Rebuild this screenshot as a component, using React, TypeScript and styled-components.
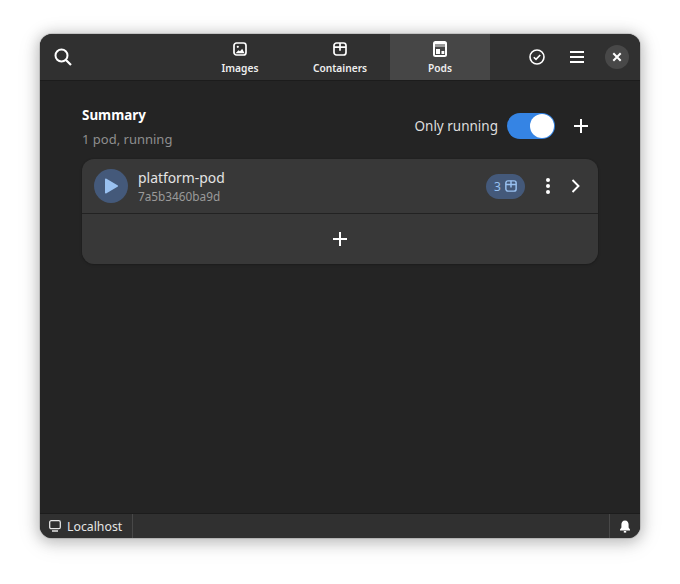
import React from "react";
import styled, { createGlobalStyle } from "styled-components";

const Global = createGlobalStyle`
  html, body { margin: 0; padding: 0; background: #fff; }
  body { font-family: "Noto Sans", "Open Sans", sans-serif; }
`;

const Page = styled.div`
  width: 680px;
  height: 584px;
  padding: 34px 40px 46px;
  box-sizing: border-box;
`;

const Win = styled.div`
  width: 600px;
  height: 504px;
  border-radius: 12px;
  overflow: hidden;
  background: #242424;
  color: #fff;
  display: flex;
  flex-direction: column;
  box-shadow: 0 0 0 1px rgba(0,0,0,.12), 0 2px 14px 2px rgba(0,0,0,.22), 0 4px 22px 4px rgba(0,0,0,.08);
`;

const Header = styled.header`
  height: 46px;
  flex: none;
  background: #303030;
  box-shadow: 0 1px 0 #1c1c1c;
  display: grid;
  grid-template-columns: 150px 300px 150px;
`;

const Start = styled.div`
  display: flex;
  align-items: center;
  padding-left: 14px;
`;

const End = styled.div`
  display: flex;
  align-items: center;
  justify-content: flex-end;
  padding-right: 11px;
  gap: 21px;
`;

const Tabs = styled.nav`
  display: grid;
  grid-template-columns: repeat(3, 100px);
`;

const Tab = styled.div<{ $active?: boolean }>`
  display: flex;
  flex-direction: column;
  align-items: center;
  padding-top: 7px;
  box-sizing: border-box;
  background: ${(p) => (p.$active ? "#464646" : "transparent")};
  font-size: 10.2px;
  font-weight: 600;
  line-height: 14px;
  gap: 4px;
  color: #eee;
`;

const TabIcon = styled.div`
  height: 16px;
  display: flex;
  align-items: center;
  justify-content: center;
`;

const CheckSlot = styled.div`
  margin-right: 4px;
`;

const CloseBtn = styled.div`
  width: 24px;
  height: 24px;
  border-radius: 50%;
  background: #484848;
  display: flex;
  align-items: center;
  justify-content: center;
`;

const Main = styled.main`
  flex: 1;
  padding: 20px 42px 0;
`;

const SummaryRow = styled.div`
  display: flex;
  justify-content: space-between;
  align-items: center;
  height: 52px;
  margin-bottom: 7px;
`;

const Titles = styled.div`
  display: flex;
  flex-direction: column;
  gap: 6px;
  padding-top: 2px;
`;

const Title = styled.div`
  font-size: 13.4px;
  font-weight: 700;
  line-height: 18px;
`;

const Sub = styled.div`
  font-size: 13px;
  line-height: 18px;
  color: #8f8f8f;
`;

const Controls = styled.div`
  display: flex;
  align-items: center;
  gap: 9px;
  padding-right: 10px;
`;

const Label = styled.span`
  font-size: 13.5px;
  color: #dedede;
`;

const Switch = styled.div`
  width: 48px;
  height: 26px;
  border-radius: 13px;
  background: #3584e4;
  position: relative;
  margin-right: 10px;
`;

const Knob = styled.div`
  position: absolute;
  right: 1px;
  top: 1px;
  width: 24px;
  height: 24px;
  border-radius: 50%;
  background: #fff;
`;

const List = styled.div`
  border-radius: 12px;
  background: #383838;
  box-shadow: 0 0 0 1px rgba(0,0,0,.04), 0 1px 3px rgba(0,0,0,.2);
  overflow: hidden;
`;

const Row = styled.div`
  height: 54px;
  display: flex;
  align-items: center;
  padding: 0 17px 0 12px;
  border-bottom: 1px solid #222;
`;

const Avatar = styled.div`
  width: 34px;
  height: 34px;
  border-radius: 50%;
  background: #44597a;
  display: flex;
  align-items: center;
  justify-content: center;
  margin-right: 10px;
`;

const RowText = styled.div`
  flex: 1;
  display: flex;
  flex-direction: column;
  gap: 1px;
`;

const RowTitle = styled.div`
  font-size: 13.9px;
  line-height: 19px;
  color: #e4e4e4;
`;

const RowSub = styled.div`
  font-size: 11.8px;
  line-height: 16px;
  color: #9a9a9a;
`;

const Badge = styled.div`
  height: 25px;
  width: 39px;
  box-sizing: border-box;
  border-radius: 13px;
  background: #44597a;
  color: #99c1f1;
  font-size: 12px;
  font-weight: 400;
  display: flex;
  align-items: center;
  justify-content: center;
  gap: 4px;
  margin-right: 21px;
`;

const Dots = styled.svg`
  display: block;
  flex: none;
  margin-right: 21px;
`;

const AddRow = styled.div`
  height: 50px;
  display: flex;
  align-items: center;
  justify-content: center;
`;

const Footer = styled.footer`
  height: 24px;
  flex: none;
  background: #303030;
  box-shadow: 0 -1px 0 #1c1c1c;
  display: flex;
  align-items: stretch;
  font-size: 12.3px;
  color: #e6e6e6;
`;

const Host = styled.div`
  width: 93px;
  display: flex;
  align-items: center;
  gap: 6px;
  padding-left: 9px;
  box-sizing: border-box;
  border-right: 1px solid #484848;
`;

const Spacer = styled.div`
  flex: 1;
`;

const Bell = styled.div`
  width: 30px;
  border-left: 1px solid #484848;
  display: flex;
  align-items: center;
  justify-content: center;
`;

const Icon = styled.svg`
  display: block;
  flex: none;
`;

const ContainerIcon = ({ c = "#fff", s = 14 }: { c?: string; s?: number }) => (
  <Icon width={s} height={s} viewBox="0 0 14 14" fill="none">
    <rect x="1" y="1" width="12" height="12" rx="2.5" stroke={c} strokeWidth="1.7" />
    <path d="M1 5.2h12M7 1v7.8" stroke={c} strokeWidth="1.7" />
  </Icon>
);

const Plus = ({ s = 14 }: { s?: number }) => (
  <Icon width={s} height={s} viewBox="0 0 14 14" fill="none">
    <path d="M7 0v14M0 7h14" stroke="#fff" strokeWidth="2" />
  </Icon>
);

export default function App() {
  return (
    <Page>
      <Global />
      <Win>
        <Header>
          <Start>
            <Icon width="18" height="18" viewBox="0 0 18 18" fill="none">
              <circle cx="7.5" cy="7.5" r="6" stroke="#fff" strokeWidth="2" />
              <path d="M12 12l5 5" stroke="#fff" strokeWidth="2.2" />
            </Icon>
          </Start>
          <Tabs>
            <Tab>
              <TabIcon>
                <Icon width="14" height="14" viewBox="0 0 14 14" fill="none">
                  <rect x="1" y="1" width="12" height="12" rx="2.5" stroke="#fff" strokeWidth="1.7" />
                  <circle cx="4.8" cy="4.8" r="1.1" fill="#fff" />
                  <path d="M2.5 11.2l3-3 1.5 1 2.2-2.4 2.3 4.4z" fill="#fff" />
                </Icon>
              </TabIcon>
              <span>Images</span>
            </Tab>
            <Tab>
              <TabIcon>
                <ContainerIcon />
              </TabIcon>
              <span>Containers</span>
            </Tab>
            <Tab $active>
              <TabIcon>
                <Icon width="14" height="16" viewBox="0 0 14 16" fill="none">
                  <rect x="0" y="0" width="14" height="16" rx="2.5" fill="#fff" />
                  <rect x="2" y="3" width="10" height="11" fill="#464646" />
                  <rect x="2" y="3" width="10" height="3" fill="#9a9a9a" />
                  <rect x="3" y="8" width="4" height="5" fill="#fff" />
                  <rect x="8.5" y="10" width="2.8" height="3" fill="#fff" />
                </Icon>
              </TabIcon>
              <span>Pods</span>
            </Tab>
          </Tabs>
          <End>
            <CheckSlot>
              <Icon width="16" height="16" viewBox="0 0 16 16" fill="none">
                <circle cx="8" cy="8" r="7" stroke="#fff" strokeWidth="1.6" />
                <path d="M4.8 8.2l2.2 2.2 4.2-4.4" stroke="#fff" strokeWidth="1.6" />
              </Icon>
            </CheckSlot>
            <Icon width="14" height="12" viewBox="0 0 14 12" fill="none">
              <path d="M0 1h14M0 6h14M0 11h14" stroke="#fff" strokeWidth="1.8" />
            </Icon>
            <CloseBtn>
              <Icon width="10" height="10" viewBox="0 0 10 10" fill="none">
                <path d="M1.3 1.3l7.4 7.4M8.7 1.3L1.3 8.7" stroke="#fff" strokeWidth="2" />
              </Icon>
            </CloseBtn>
          </End>
        </Header>
        <Main>
          <SummaryRow>
            <Titles>
              <Title>Summary</Title>
              <Sub>1 pod, running</Sub>
            </Titles>
            <Controls>
              <Label>Only running</Label>
              <Switch>
                <Knob />
              </Switch>
              <Plus />
            </Controls>
          </SummaryRow>
          <List>
            <Row>
              <Avatar>
                <Icon width="14" height="16" viewBox="0 0 14 16">
                  <path d="M1 1.5v13a1 1 0 0 0 1.5.8l11-6.5a1 1 0 0 0 0-1.6L2.5.7A1 1 0 0 0 1 1.5z" fill="#99c1f1" />
                </Icon>
              </Avatar>
              <RowText>
                <RowTitle>platform-pod</RowTitle>
                <RowSub>7a5b3460ba9d</RowSub>
              </RowText>
              <Badge>
                3
                <ContainerIcon c="#99c1f1" s={12} />
              </Badge>
              <Dots width="4" height="16" viewBox="0 0 4 16">
                <circle cx="2" cy="2" r="2" fill="#fff" />
                <circle cx="2" cy="8" r="2" fill="#fff" />
                <circle cx="2" cy="14" r="2" fill="#fff" />
              </Dots>
              <Icon width="10" height="14" viewBox="0 0 10 14" fill="none">
                <path d="M1.5 1l6 6-6 6" stroke="#fff" strokeWidth="1.9" />
              </Icon>
            </Row>
            <AddRow>
              <Plus />
            </AddRow>
          </List>
        </Main>
        <Footer>
          <Host>
            <Icon width="12" height="12" viewBox="0 0 12 12" fill="none">
              <rect x="0.7" y="0.7" width="10.6" height="8" rx="1.5" stroke="#e6e6e6" strokeWidth="1.3" />
              <path d="M3 11h6" stroke="#e6e6e6" strokeWidth="1.3" />
            </Icon>
            Localhost
          </Host>
          <Spacer />
          <Bell>
            <Icon width="12" height="13" viewBox="0 0 12 13">
              <path d="M6 0.5c-2.4 0-3.6 1.8-3.6 4v3L1 9.5v1h10v-1L9.6 7.5v-3c0-2.2-1.2-4-3.6-4z" fill="#fff" />
              <rect x="4.8" y="11" width="2.4" height="1.6" fill="#fff" />
            </Icon>
          </Bell>
        </Footer>
      </Win>
    </Page>
  );
}
